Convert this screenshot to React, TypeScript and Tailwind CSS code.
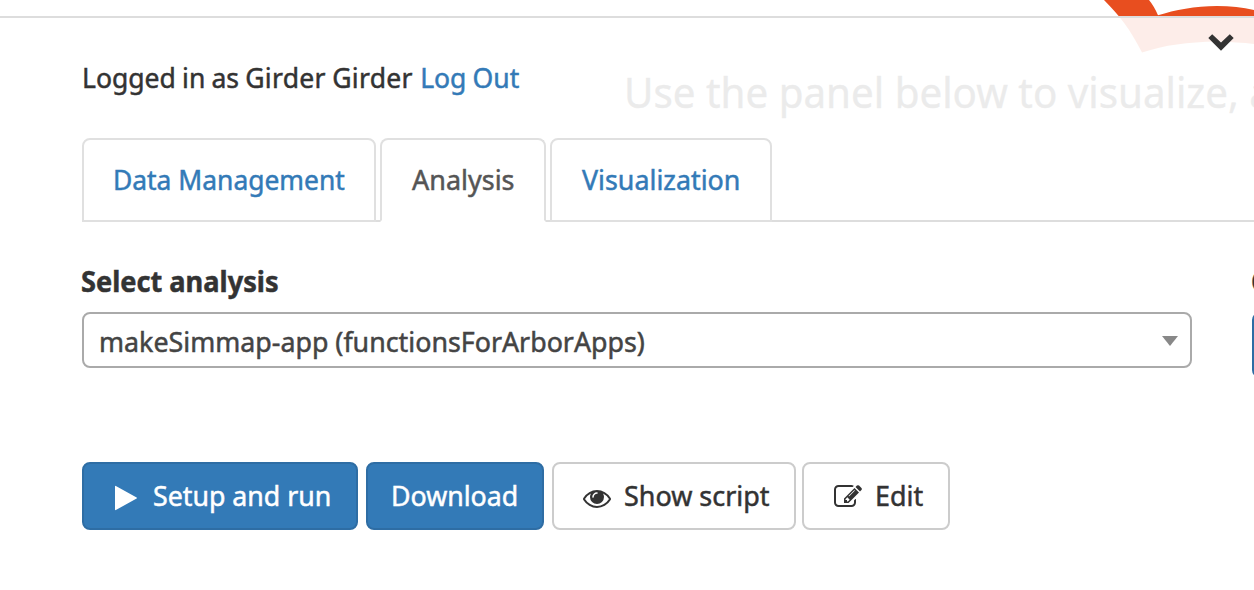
import type { ReactNode } from "react";

function Glyph({ d, className }: { d: string; className: string }) {
  return (
    <svg viewBox="0 0 1792 1792" fill="currentColor" className={`shrink-0 ${className}`} aria-hidden="true">
      <path d={d} />
    </svg>
  );
}

const PLAY =
  "M1576 927l-1328 738q-23 13-39.5 3t-16.5-36v-1472q0-26 16.5-36t39.5 3l1328 738q23 13 23 31t-23 31z";
const EYE =
  "M1664 960q-152-236-381-353 61 104 61 225 0 185-131.5 316.5t-316.5 131.5-316.5-131.5-131.5-316.5q0-121 61-225-229 117-381 353 133 205 333.5 326.5t434.5 121.5 434.5-121.5 333.5-326.5zm-720-384q0-20-14-34t-34-14q-125 0-214.5 89.5t-89.5 214.5q0 20 14 34t34 14 34-14 14-34q0-86 61-147t147-61q20 0 34-14t14-34zm848 384q0 34-20 69-140 230-376.5 368.5t-499.5 138.5-499.5-139-376.5-368q-20-35-20-69t20-69q140-229 376.5-368t499.5-139 499.5 139 376.5 368q20 35 20 69z";
const EDIT =
  "M888 1184l116-116-152-152-116 116v56h96v96h56zm440-720q-16-16-33 1l-350 350q-17 17-1 33t33-1l350-350q17-17 1-33zm80 594v190q0 119-84.5 203.5t-203.5 84.5h-832q-119 0-203.5-84.5t-84.5-203.5v-832q0-119 84.5-203.5t203.5-84.5h832q63 0 117 25 15 7 18 23 3 17-9 29l-49 49q-14 14-32 8-23-6-45-6h-832q-66 0-113 47t-47 113v832q0 66 47 113t113 47h832q66 0 113-47t47-113v-126q0-13 9-22l64-64q15-15 35-7t20 29zm-96-738l288 288-672 672h-288v-288zm444 132l-92 92-288-288 92-92q28-28 68-28t68 28l152 152q28 28 28 68t-28 68z";

/* Slightly condensed run of text, anchored at its left edge. */
function Text({ className = "scale-x-[0.955]", children }: { className?: string; children: ReactNode }) {
  return (
    <span className={`block origin-left whitespace-nowrap [-webkit-text-stroke:0.5px_currentColor] ${className}`}>
      {children}
    </span>
  );
}

function Tab({ className, children }: { className: string; children: ReactNode }) {
  return (
    <button
      className={`flex h-[84px] shrink-0 items-center rounded-t-lg border-2 border-[#e0e0e0] pb-0.5 ${className}`}
    >
      {children}
    </button>
  );
}

function Button({ className, children }: { className: string; children: ReactNode }) {
  return (
    <button className={`flex h-[68px] shrink-0 items-center rounded-lg border-2 pb-0.5 ${className}`}>
      {children}
    </button>
  );
}

export default function App() {
  return (
    <div className="relative h-[590px] w-full overflow-hidden bg-white pt-4 font-['Noto_Sans',sans-serif] text-[28px] leading-10 text-[#333]">
      <svg className="absolute top-0 right-0 h-[60px] w-[160px]" viewBox="1094 0 160 60" aria-hidden="true">
        <path
          fill="#e84e1f"
          d="M1104 0C1120 16 1130 29 1142 52.5C1165 45 1187 42 1217 41.5Q1237 42 1254 44V10Q1237 6 1217 6C1195 6 1175 10 1158 15.3Q1154 6 1149 0Z"
        />
      </svg>
      <p className="absolute top-[63px] left-[624px] text-[42px] leading-[58px]">
        <Text className="scale-x-[0.96]">Use the panel below to visualize, analyze</Text>
      </p>

      <main className="relative h-full border-t-2 border-[#ddd] bg-white/90 bg-clip-padding">
        <button className="absolute top-[14px] left-[1207px]" aria-label="Collapse panel">
          <svg className="h-5 w-7" viewBox="0 0 28 20" fill="#333">
            <path d="M1.3 6.1 5.2 2.2 14 10.4 22.8 2.2 26.7 6.1 14 18.8Z" />
          </svg>
        </button>

        <div className="flex flex-col pl-[82px]">
          <p className="mt-[39px] h-[41px]">
            <Text className="-ml-[0.5px] scale-x-[0.948] [word-spacing:-0.8px]">
              Logged in as <span className="tracking-[0.3px]">Girder Girder </span>
              <a className="ml-px text-[#337ab7]">Log Out</a>
            </Text>
          </p>

          <nav className="mt-10 flex h-[84px] gap-1 bg-[linear-gradient(#ddd,#ddd)] bg-[length:100%_2px] bg-bottom bg-no-repeat text-[#337ab7]">
            <Tab className="w-[294px] pl-[29px]">
              <Text className="scale-x-[0.943]">Data Management</Text>
            </Tab>
            <Tab className="w-[166px] border-b-white bg-white pl-[30px] text-[#555]">
              <Text className="scale-x-[0.963]">Analysis</Text>
            </Tab>
            <Tab className="w-[222px] pl-[30px]">
              <Text className="scale-x-[0.958]">Visualization</Text>
            </Tab>
          </nav>

          <div className="mt-[39px] flex gap-[60px]">
            <label className="flex w-[1110px] shrink-0 flex-col">
              <span className="h-10 font-bold">
                <Text className="-ml-px scale-x-[0.97]">Select analysis</Text>
              </span>
              <span className="mt-[11px] flex h-14 items-center justify-between rounded-lg border-2 border-[#aaa] bg-white pr-3 pl-[15px] text-[#444]">
                <Text className="scale-x-[0.957] pt-px">makeSimmap-app (functionsForArborApps)</Text>
                <svg className="mt-0.5 h-[10px] w-4" viewBox="0 0 16 10" fill="#888" aria-hidden="true">
                  <path d="M0 0H16L8 10Z" />
                </svg>
              </span>
            </label>
            <div className="flex w-[200px] shrink-0 flex-col">
              <span className="h-10 font-bold">
                <Text className="-ml-px scale-x-[0.97]">Get results</Text>
              </span>
              <span className="mt-[11px] h-[66px] rounded-lg border-2 border-[#2e6da4] bg-[#337ab7]" />
            </div>
          </div>

          <div className="mt-[84px] flex">
            <Button className="w-[276px] border-[#2e6da4] bg-[#337ab7] pl-7 text-white">
              <Glyph d={PLAY} className="mt-1.5 mr-[13px] size-7" />
              <Text>Setup and run</Text>
            </Button>
            <Button className="ml-2 w-[178px] border-[#2e6da4] bg-[#337ab7] pl-[23px] text-white">
              <Text>Download</Text>
            </Button>
            <Button className="ml-2 w-[244px] border-[#ccc] bg-white pl-[29px]">
              <Glyph d={EYE} className="mt-1.5 mr-[13px] size-7" />
              <Text className="scale-x-[0.962]">Show script</Text>
            </Button>
            <Button className="ml-1.5 w-[148px] border-[#ccc] bg-white pl-[30px]">
              <Glyph d={EDIT} className="mt-1 mr-[13px] size-7" />
              <Text className="scale-x-[0.96]">Edit</Text>
            </Button>
          </div>
        </div>
      </main>
    </div>
  );
}
